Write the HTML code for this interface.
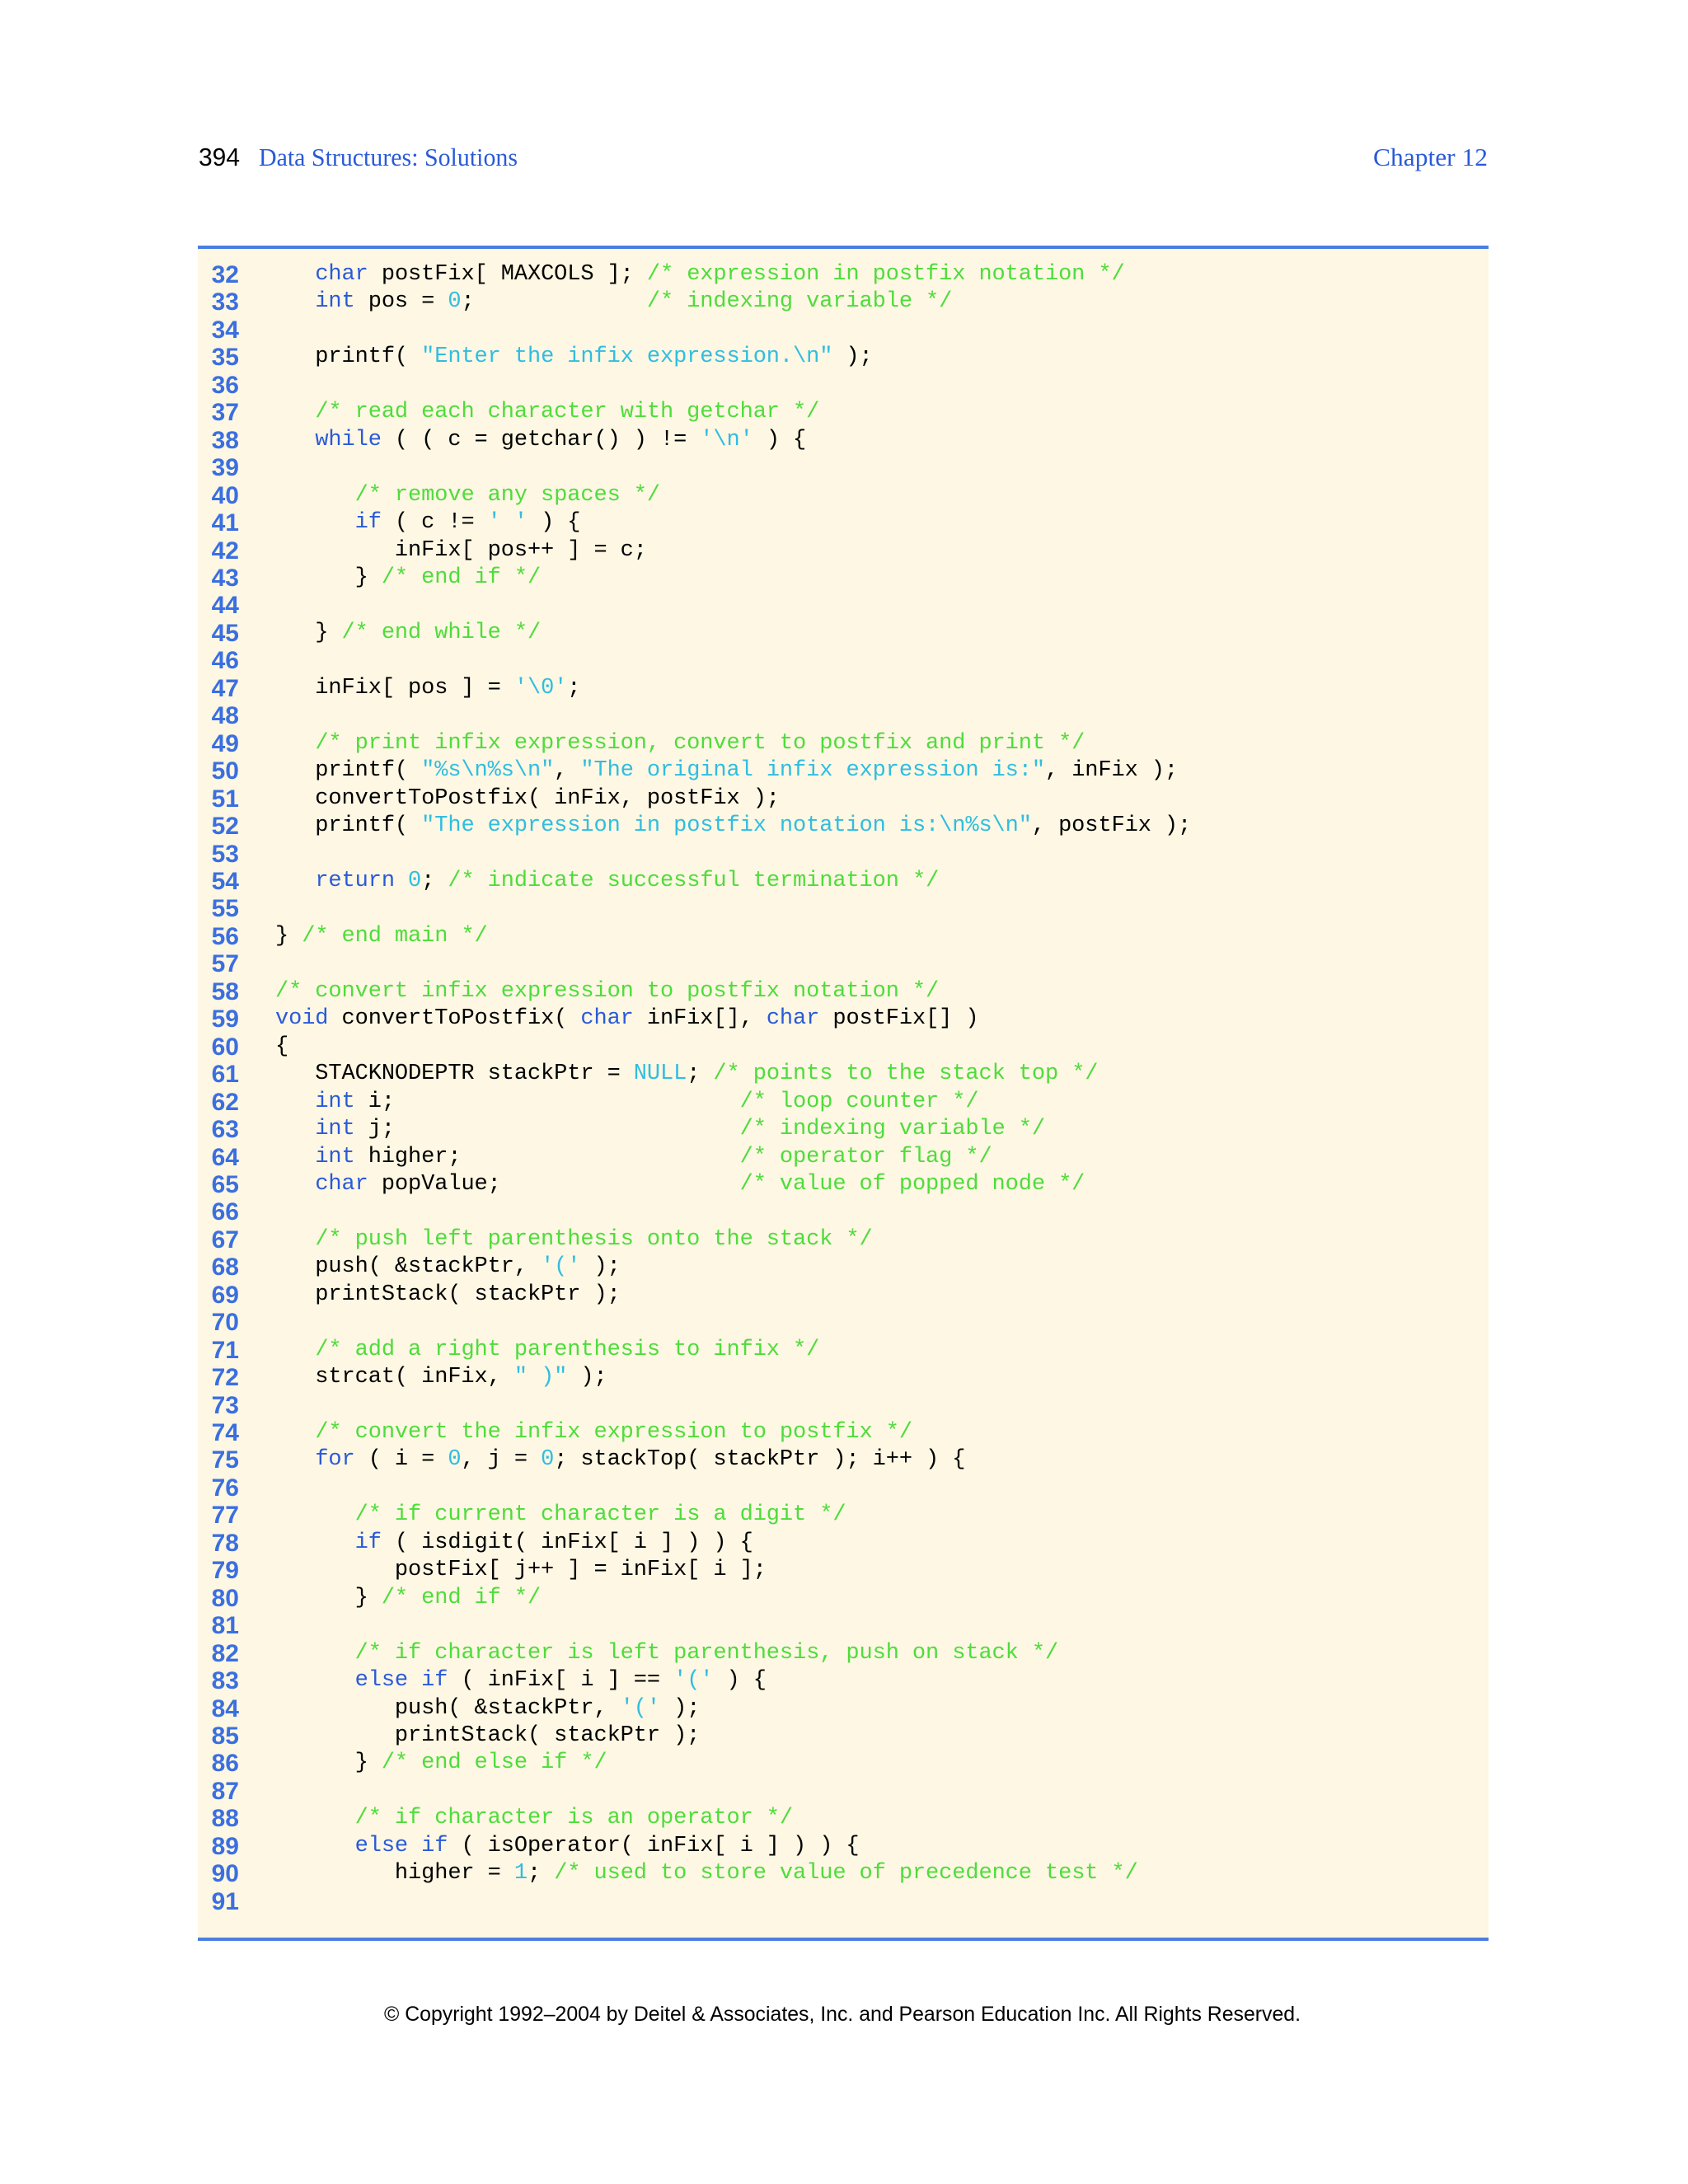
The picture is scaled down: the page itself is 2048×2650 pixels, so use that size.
<!DOCTYPE html>
<html><head><meta charset="utf-8"><style>
html,body{margin:0;padding:0;background:#fff;}
body{width:2048px;height:2650px;position:relative;overflow:hidden;}
.box{position:absolute;left:240px;top:298px;width:1566px;height:2049px;background:#fdf7e3;border-top:4px solid #4a7fe0;border-bottom:4px solid #4a7fe0;}
.nums{position:absolute;left:230px;top:317px;width:60px;text-align:right;font-family:"Liberation Sans Narrow","Liberation Sans",sans-serif;font-weight:bold;font-size:30px;line-height:33.46px;color:#3b6fe0;white-space:pre;}
.code{position:absolute;left:334px;top:317px;font-family:"Liberation Mono",monospace;font-size:27px;letter-spacing:-0.1px;line-height:33.46px;color:#000;white-space:pre;}
.k{color:#2a5ad8}.s{color:#30bde0}.c{color:#4fdc3c}
</style></head><body>
<svg width="2048" height="2650" style="position:absolute;left:0;top:0">
<text x="241" y="201" font-family="Liberation Sans Narrow, Liberation Sans, sans-serif" font-size="31" textLength="50" lengthAdjust="spacingAndGlyphs" fill="#000">394</text>
<text x="314" y="201" font-family="Liberation Serif, serif" font-size="31" textLength="314" lengthAdjust="spacingAndGlyphs" fill="#2a5ad8">Data Structures: Solutions</text>
<text x="1666" y="201" font-family="Liberation Serif, serif" font-size="31" textLength="139" lengthAdjust="spacingAndGlyphs" fill="#2a5ad8">Chapter  12</text>
<text x="466" y="2452" font-family="Liberation Sans, sans-serif" font-size="25" textLength="1112" lengthAdjust="spacingAndGlyphs" fill="#000">© Copyright 1992–2004 by Deitel &amp; Associates, Inc. and Pearson Education Inc. All Rights Reserved.</text>
</svg>
<div class="box"></div>
<div class="nums">32
33
34
35
36
37
38
39
40
41
42
43
44
45
46
47
48
49
50
51
52
53
54
55
56
57
58
59
60
61
62
63
64
65
66
67
68
69
70
71
72
73
74
75
76
77
78
79
80
81
82
83
84
85
86
87
88
89
90
91</div>
<div class="code">   <span class="k">char</span> postFix[ MAXCOLS ]; <span class="c">/* expression in postfix notation */</span>
   <span class="k">int</span> pos = <span class="s">0</span>;             <span class="c">/* indexing variable */</span>

   printf( <span class="s">"Enter the infix expression.\n"</span> );

   <span class="c">/* read each character with getchar */</span>
   <span class="k">while</span> ( ( c = getchar() ) != <span class="s">'\n'</span> ) {

      <span class="c">/* remove any spaces */</span>
      <span class="k">if</span> ( c != <span class="s">' '</span> ) {
         inFix[ pos++ ] = c;
      } <span class="c">/* end if */</span>

   } <span class="c">/* end while */</span>

   inFix[ pos ] = <span class="s">'\0'</span>;

   <span class="c">/* print infix expression, convert to postfix and print */</span>
   printf( <span class="s">"%s\n%s\n"</span>, <span class="s">"The original infix expression is:"</span>, inFix );
   convertToPostfix( inFix, postFix );
   printf( <span class="s">"The expression in postfix notation is:\n%s\n"</span>, postFix );

   <span class="k">return</span> <span class="s">0</span>; <span class="c">/* indicate successful termination */</span>

} <span class="c">/* end main */</span>

<span class="c">/* convert infix expression to postfix notation */</span>
<span class="k">void</span> convertToPostfix( <span class="k">char</span> inFix[], <span class="k">char</span> postFix[] )
{
   STACKNODEPTR stackPtr = <span class="s">NULL</span>; <span class="c">/* points to the stack top */</span>
   <span class="k">int</span> i;                          <span class="c">/* loop counter */</span>
   <span class="k">int</span> j;                          <span class="c">/* indexing variable */</span>
   <span class="k">int</span> higher;                     <span class="c">/* operator flag */</span>
   <span class="k">char</span> popValue;                  <span class="c">/* value of popped node */</span>

   <span class="c">/* push left parenthesis onto the stack */</span>
   push( &amp;stackPtr, <span class="s">'('</span> );
   printStack( stackPtr );

   <span class="c">/* add a right parenthesis to infix */</span>
   strcat( inFix, <span class="s">" )"</span> );

   <span class="c">/* convert the infix expression to postfix */</span>
   <span class="k">for</span> ( i = <span class="s">0</span>, j = <span class="s">0</span>; stackTop( stackPtr ); i++ ) {

      <span class="c">/* if current character is a digit */</span>
      <span class="k">if</span> ( isdigit( inFix[ i ] ) ) {
         postFix[ j++ ] = inFix[ i ];
      } <span class="c">/* end if */</span>

      <span class="c">/* if character is left parenthesis, push on stack */</span>
      <span class="k">else if</span> ( inFix[ i ] == <span class="s">'('</span> ) {
         push( &amp;stackPtr, <span class="s">'('</span> );
         printStack( stackPtr );
      } <span class="c">/* end else if */</span>

      <span class="c">/* if character is an operator */</span>
      <span class="k">else if</span> ( isOperator( inFix[ i ] ) ) {
         higher = <span class="s">1</span>; <span class="c">/* used to store value of precedence test */</span>
</div>
</body></html>
